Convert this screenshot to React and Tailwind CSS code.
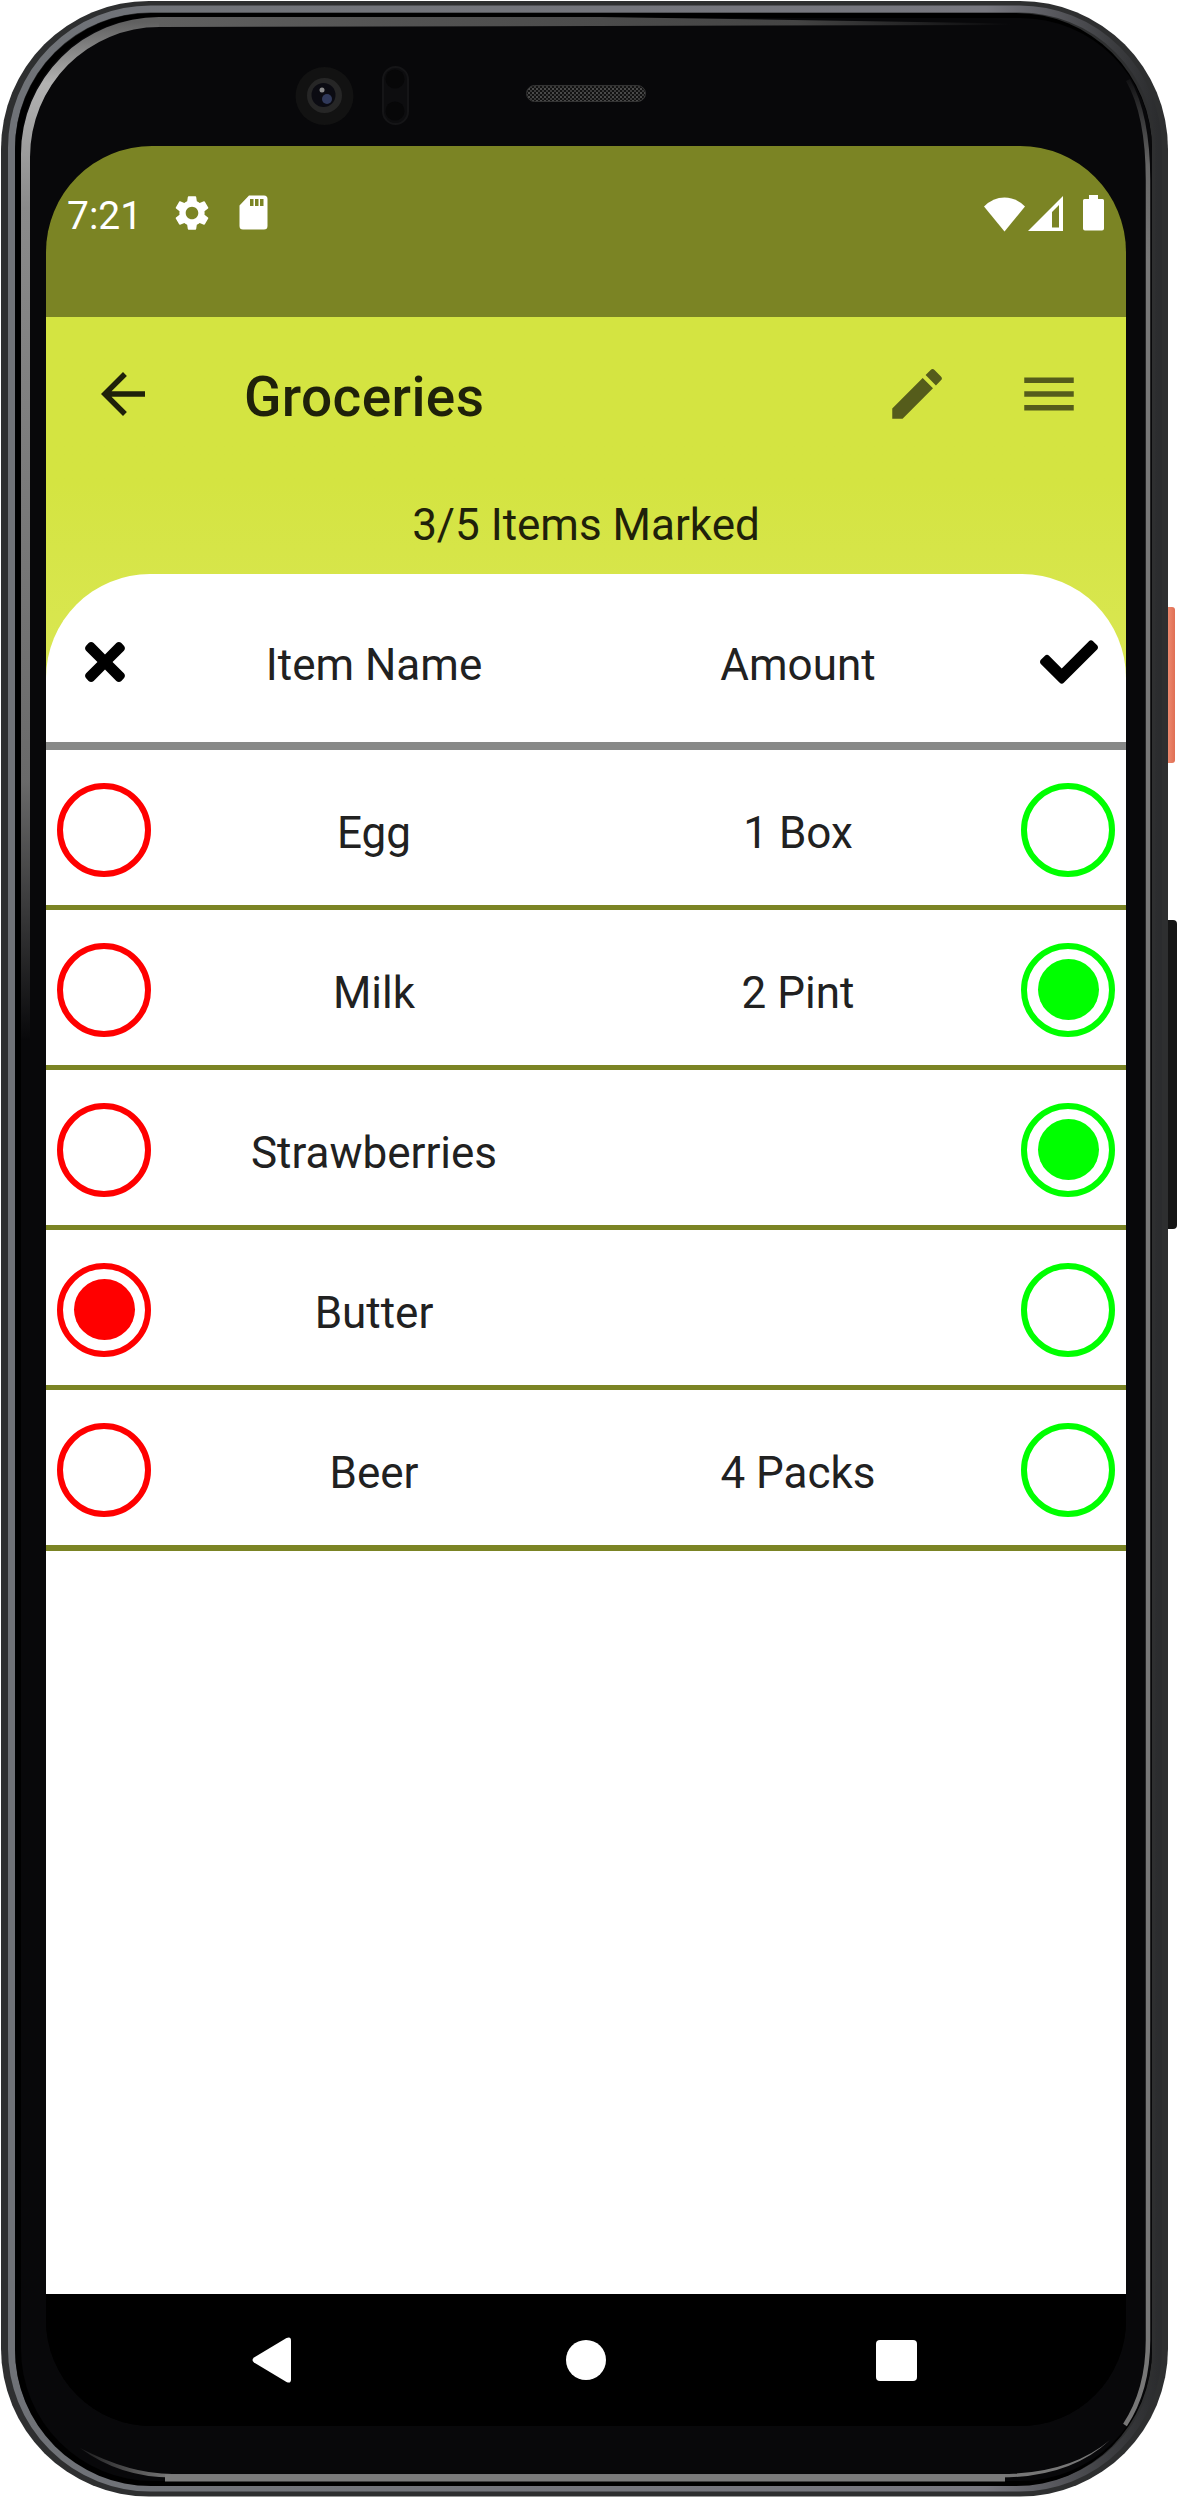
import { MdArrowBack, MdEdit, MdMenu, MdSettings } from "react-icons/md";
import { FaCheck, FaTimes } from "react-icons/fa";

const items = [
  { name: "Egg", amount: "1 Box", mark: null },
  { name: "Milk", amount: "2 Pint", mark: "have" },
  { name: "Strawberries", amount: "", mark: "have" },
  { name: "Butter", amount: "", mark: "missing" },
  { name: "Beer", amount: "4 Packs", mark: null },
];

function DeviceFrame() {
  return (
    <svg className="absolute inset-0" width="1178" height="2498" viewBox="0 0 1178 2498" fill="none">
      <defs>
        <linearGradient id="inner" gradientUnits="userSpaceOnUse" x1="0" y1="0" x2="0" y2="1040">
          <stop offset="0.021" stopColor="#606060" />
          <stop offset="0.08" stopColor="#b2b2b2" />
          <stop offset="0.2" stopColor="#8a8a8a" />
          <stop offset="0.75" stopColor="#6a6a6a" />
          <stop offset="1" stopColor="#08080a" />
        </linearGradient>
        <linearGradient id="innerTop" gradientUnits="userSpaceOnUse" x1="159" y1="0" x2="1010" y2="0">
          <stop offset="0" stopColor="#606060" />
          <stop offset="0.3" stopColor="#525252" />
          <stop offset="0.75" stopColor="#444" />
          <stop offset="1" stopColor="#08080a" />
        </linearGradient>
        <linearGradient id="innerRight" gradientUnits="userSpaceOnUse" x1="0" y1="70" x2="0" y2="260">
          <stop offset="0" stopColor="#08080a" />
          <stop offset="0.5" stopColor="#666" />
          <stop offset="1" stopColor="#777" />
        </linearGradient>
        <linearGradient id="innerBottom" gradientUnits="userSpaceOnUse" x1="60" y1="0" x2="1150" y2="0">
          <stop offset="0" stopColor="#08080a" />
          <stop offset="0.1" stopColor="#777" />
          <stop offset="1" stopColor="#777" />
        </linearGradient>
        <linearGradient id="rim" x1="0" y1="0" x2="1" y2="0">
          <stop offset="0" stopColor="#6f7277" />
          <stop offset="0.85" stopColor="#77777f" />
          <stop offset="0.96" stopColor="#3c3d40" />
          <stop offset="1" stopColor="#2b2c2e" />
        </linearGradient>
        <linearGradient id="power" x1="0" y1="0" x2="1" y2="0">
          <stop offset="0" stopColor="#d8654b" />
          <stop offset="0.5" stopColor="#ee8a70" />
          <stop offset="1" stopColor="#e06f54" />
        </linearGradient>
        <pattern id="mesh" width="4" height="4" patternUnits="userSpaceOnUse">
          <rect width="4" height="4" fill="#121212" />
          <rect width="2" height="2" fill="#4a4a4a" />
          <rect x="2" y="2" width="2" height="2" fill="#3a3a3a" />
        </pattern>
      </defs>

      {/* side buttons */}
      <rect x="1160" y="607" width="15" height="156" rx="3" fill="url(#power)" />
      <rect x="1160" y="920" width="17" height="309" rx="4" fill="#151515" />

      {/* metal body */}
      <rect x="1" y="1" width="1167" height="2495.500" rx="148" fill="#2e2f30" />
      <rect x="11.500" y="9" width="1147" height="2479" rx="139" stroke="url(#rim)" strokeWidth="7" />
      <rect x="15" y="13" width="1137" height="2473" rx="136" fill="#000" />
      <rect x="21" y="18" width="1131" height="2463" rx="132" fill="#08080a" />

      {/* glass highlight */}
      <path d="M21 1040V154A138 137 0 0 1 159 17V27A129 130 0 0 0 30 157V1040Z" fill="url(#inner)" />
      <path d="M159 17H600L1010 23.500V25L159 27Z" fill="url(#innerTop)" />
      <path d="M1128 80Q1148 115 1148 180V2340Q1148 2390 1125 2425" stroke="url(#innerRight)" strokeWidth="4.500" />
      <path d="M1110 2440Q1070 2477.500 1000 2477.500H172Q120 2477.500 80 2448Q130 2474 172 2474H1000Q1070 2474 1110 2440Z" fill="url(#innerBottom)" />
      <path d="M165 2478H1005" stroke="#7b7b7b" strokeWidth="7" />

      {/* front camera and sensors */}
      <circle cx="324.500" cy="96" r="29" fill="#121212" />
      <circle cx="324.500" cy="95.500" r="17.500" fill="#262626" />
      <circle cx="323.500" cy="95" r="12" fill="#0b0b12" />
      <circle cx="327" cy="99" r="5" fill="#30395a" />
      <circle cx="322" cy="90" r="2.500" fill="#8a8a8a" />
      <rect x="383" y="67" width="25" height="57" rx="12.500" fill="#0d0d0f" stroke="#151517" strokeWidth="2" />
      <circle cx="395" cy="79" r="9.500" fill="#070708" />
      <circle cx="395" cy="111" r="9.500" fill="#070708" />
      <rect x="526.500" y="85.500" width="119" height="16" rx="8" fill="url(#mesh)" stroke="#333" />
    </svg>
  );
}

function SdCard() {
  return (
    <svg width="29" height="35" viewBox="0 0 29 35">
      <path fillRule="evenodd" fill="#fff" d="M10 0.500H25A3.500 3.500 0 0 1 28.500 4V31A3.500 3.500 0 0 1 25 34.500H4A3.500 3.500 0 0 1 0.500 31V10.500ZM11 4V11H14.500V4ZM16 4V11H19.500V4ZM21 4V11H24.500V4Z" />
    </svg>
  );
}

function Wifi() {
  return (
    <svg width="41" height="35" viewBox="0 0 41 35">
      <path fill="#fff" d="M0 9.500Q9 0.500 20.500 0.500T41 9.500L20.500 34.500Z" />
    </svg>
  );
}

function Signal() {
  return (
    <svg width="35" height="35" viewBox="0 0 35 35">
      <path fillRule="evenodd" fill="#fff" d="M0 35L35 0V35ZM24 16V31.500H31V9Z" />
    </svg>
  );
}

function Battery() {
  return (
    <svg width="21" height="36" viewBox="0 0 21 36">
      <path fill="#fff" d="M6 0H15V4H19.500Q21 4 21 5.500V33.500Q21 35.500 19 35.500H2Q0 35.500 0 33.500V5.500Q0 4 1.500 4H6Z" />
    </svg>
  );
}

function StatusBar() {
  return (
    <div className="flex h-[171px] shrink-0 items-start bg-[#7b8424] pl-[21px] pr-[22px] pt-[49px] text-white">
      <span className="-mt-[14px] w-[104px] text-[39px] leading-[70px]">7:21</span>
      <div className="flex h-9 w-[42px] items-center justify-center">
        <MdSettings size={42} className="shrink-0" />
      </div>
      <div className="ml-[26px]"><SdCard /></div>
      <div className="ml-auto mt-0.5"><Wifi /></div>
      <div className="ml-[3px] mt-px"><Signal /></div>
      <div className="ml-5"><Battery /></div>
    </div>
  );
}

function Radio({ checked, tone }) {
  const ring = tone === "red" ? "border-[#ff0000]" : "border-[#00ff00]";
  const dot = tone === "red" ? "bg-[#ff0000]" : "bg-[#00ff00]";
  return (
    <div className="flex w-[116px] shrink-0 justify-center">
      <div className={`flex size-[94px] items-center justify-center rounded-full border-[6px] ${ring}`}>
        {checked && <div className={`size-[61px] rounded-full ${dot}`} />}
      </div>
    </div>
  );
}

export default function App() {
  return (
    <div className="relative h-[2498px] w-[1178px] overflow-hidden bg-white pl-[46px] pt-[146px] font-[Roboto,sans-serif] text-[#212121]">
      <DeviceFrame />
      <div className="relative flex h-[2280px] w-[1080px] flex-col overflow-hidden rounded-[106px] bg-black">
        <StatusBar />

        <header className="h-[366px] shrink-0 bg-linear-to-b from-[#d4e441] from-45% to-[#dae753] text-[#1f210a]">
          <div className="flex h-[154px] items-center px-[44px]">
            <MdArrowBack size={66} />
            <h1 className="ml-[88px] mt-1.5 text-[55px] font-medium leading-none tracking-[0.4px]">Groceries</h1>
            <MdEdit size={66} className="ml-auto text-[#555c1b]" />
            <MdMenu size={66} className="ml-[66px] text-[#555c1b]" />
          </div>
          <p className="mt-[28px] text-center text-[44px] leading-[52px]">3/5 Items Marked</p>
        </header>

        <main className="-mt-[109px] grow rounded-t-[104px] bg-white">
          <div className="flex h-[176px] items-center border-b-8 border-[#888988]">
            <div className="flex w-[116px] justify-center pl-0.5 pt-2 text-black"><FaTimes size={58} /></div>
            <div className="flex-1 pt-[14px] text-center text-[44px]">Item Name</div>
            <div className="flex-1 pt-[14px] text-center text-[44px]">Amount</div>
            <div className="flex w-[116px] justify-center pl-0.5 pt-2 text-black"><FaCheck size={58} /></div>
          </div>
          {items.map((item) => (
            <div key={item.name} className="flex h-40 items-center border-b-5 border-[#7b8424] pt-1 last:h-[161px] last:border-b-6">
              <Radio tone="red" checked={item.mark === "missing"} />
              <div className="flex-1 pt-[7px] text-center text-[44px]">{item.name}</div>
              <div className="flex-1 pt-[7px] text-center text-[44px]">{item.amount}</div>
              <Radio tone="green" checked={item.mark === "have"} />
            </div>
          ))}
        </main>

        <nav className="flex h-[132px] shrink-0 items-center bg-black pl-[206px] pr-[209px]">
          <svg width="39" height="46" viewBox="0 0 39 46">
            <path fill="#fff" d="M2 20.500L34.500 1Q39 -1 39 3.500V42.500Q39 47 34.500 45L2 25.500Q-1 23 2 20.500Z" />
          </svg>
          <div className="ml-[275px] size-10 rounded-full bg-white" />
          <div className="ml-auto size-[41px] rounded-[4px] bg-white" />
        </nav>
      </div>
    </div>
  );
}
